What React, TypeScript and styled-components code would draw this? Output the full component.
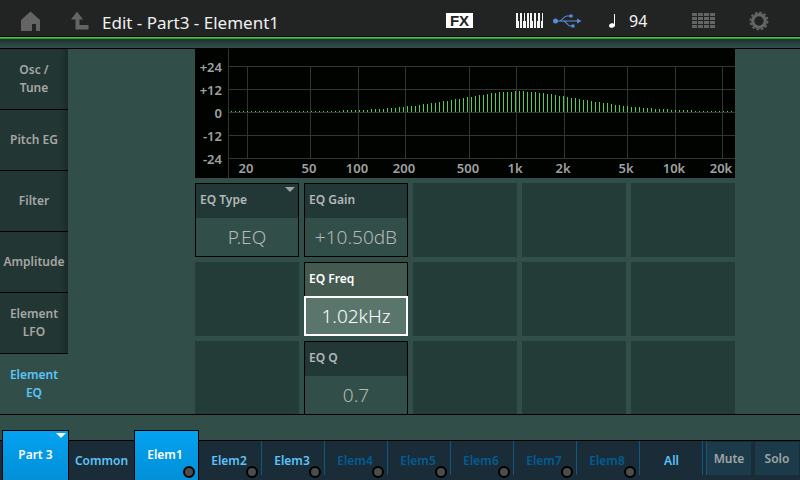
import React, { useState } from "react";
import styled, { createGlobalStyle, css } from "styled-components";

const GlobalStyle = createGlobalStyle`
  * { box-sizing: border-box; }
  body { margin: 0; background: #324e49; }
  button { font: inherit; color: inherit; border: 0; padding: 0; margin: 0; background: none; cursor: pointer; }
  svg { display: block; }
`;

const Screen = styled.div`
  display: flex;
  flex-direction: column;
  height: 100vh;
  overflow: hidden;
  background: #324e49;
  color: #a6a6a6;
  font-family: "Noto Sans", "Open Sans", sans-serif;
  font-size: 12px;
  font-weight: 600;
  line-height: 18px;
`;

const TopBar = styled.header`
  display: flex;
  align-items: center;
  height: 40px;
  flex: none;
  padding: 1px 31px 0 20px;
  background: linear-gradient(#222423 36px, #000 36px 37px, #4fc143 37px 38px, #2f9a2b 38px 39px, #1c3a30 39px);
`;

const IconButton = styled.button<{ $gap: number }>`
  display: flex;
  margin-right: ${(p) => p.$gap}px;
`;

const Title = styled.h1`
  flex: 1;
  margin: 0;
  padding-top: 4px;
  color: #f0f0f0;
  font-size: 17px;
  font-weight: 400;
  line-height: 22px;
  white-space: nowrap;
`;

const Tempo = styled.span`
  width: 63px;
  color: #f4f4f4;
  font-size: 16px;
  font-weight: 400;
`;

const Shade = styled.div`
  height: 8px;
  flex: none;
  background: linear-gradient(#1f3535, #26413f 40%, #324e49);
`;

const Body = styled.div`
  display: flex;
  flex: 1;
  min-height: 0;
  border: solid #000;
  border-width: 1px 0;
`;

const SideNav = styled.nav`
  display: flex;
  flex-direction: column;
  width: 68px;
  flex: none;
`;

const SideTab = styled.button<{ $active?: boolean }>`
  flex: 1;
  color: ${(p) => (p.$active ? "#5bc4fb" : "#a6a6a6")};
  white-space: pre-line;
  border-bottom: ${(p) => (p.$active ? "0" : "1px solid #000")};
  background: ${(p) => (p.$active ? "none" : "linear-gradient(90deg, #223633 60px, #1a2a29)")};
`;

const Content = styled.main`
  flex: 1;
  min-width: 0;
  overflow: hidden;
  padding: 0 65px 0 127px;
`;

const Graph = styled.svg`
  width: 100%;
  background: #000300;
  text {
    font-size: 13px;
    font-weight: 600;
    fill: #a0a0a0;
  }
`;

const ParamGrid = styled.div`
  display: grid;
  grid-template-columns: repeat(5, 1fr);
  grid-auto-rows: 74px;
  gap: 5px;
  padding-top: 5px;
`;

const EmptyCell = styled.div`
  background: #233c38;
`;

const ParamCard = styled.button<{ $selected: boolean }>`
  display: flex;
  flex-direction: column;
  position: relative;
  min-width: 0;
  border: 1px solid #000;
  text-align: left;
  color: #b4b8b6;
  background: #324e49;
  ${(p) =>
    p.$selected &&
    css`
      border-width: 1px 0 0;
      color: #fff;
    `}
`;

const ParamName = styled.span<{ $selected: boolean }>`
  width: 100%;
  height: ${(p) => (p.$selected ? 33 : 34)}px;
  padding: 7px 4px;
  background: ${(p) => (p.$selected ? "#445a50" : "#213837")};
  ${(p) =>
    p.$selected &&
    css`
      border: solid #000;
      border-width: 0 1px;
    `}
`;

const ParamValue = styled.span<{ $selected: boolean }>`
  display: flex;
  align-items: center;
  justify-content: center;
  flex: 1;
  width: 100%;
  font-size: 19px;
  font-weight: 300;
  ${(p) =>
    p.$selected &&
    css`
      border: 2px solid #fff;
      background: #5a766c;
    `}
`;

const MenuMark = styled.svg`
  position: absolute;
  top: 3px;
  right: 3px;
`;

const BottomBar = styled.nav`
  display: flex;
  align-items: flex-end;
  flex: none;
  height: 50px;
  margin-top: 15px;
  padding: 0 1px 0 2px;
  background: linear-gradient(transparent 10px, #000 10px 11px, #1b2c39 11px);
`;

const BottomTab = styled.button<{ $tone: "on" | "raised" | "dim"; $grow: number; $line?: boolean }>`
  display: flex;
  align-items: center;
  justify-content: center;
  position: relative;
  flex: ${(p) => p.$grow} 1 0;
  height: 39px;
  color: ${(p) => (p.$tone === "dim" ? "#025c92" : "#5bc4fb")};
  background: ${(p) => (p.$line ? "linear-gradient(#0f5880, #0f5880) right top / 1px 34px no-repeat" : "none")};
  ${(p) =>
    p.$tone === "raised" &&
    css`
      height: 50px;
      color: #fff;
      background: linear-gradient(#04a2f2, #0290d8);
      box-shadow: inset 1px 1px #000, inset -1px 0 #000;
    `}
`;

const TabLabel = styled.span`
  margin-right: 3px;
`;

const Lamp = styled.svg`
  position: absolute;
  right: 4px;
  bottom: 2px;
`;

const Divider = styled.span`
  width: 4px;
  height: 34px;
  align-self: flex-start;
  margin-top: 11px;
  border-right: 1px solid #0f5880;
`;

const SmallButton = styled.button`
  flex: 44 1 0;
  height: 33px;
  margin-bottom: 5px;
  color: #a0a4a6;
  background: #1b3b4a;
  & + & { margin-left: 4px; }
`;

const sideTabs = ["Osc /\nTune", "Pitch EG", "Filter", "Amplitude", "Element\nLFO", "Element\nEQ"];

// [bar height, number of neighbouring bars with it]
const barRuns: [number, number][] = [
  [1, 28], [2, 7], [3, 4], [4, 3], [5, 2], [6, 3], [7, 1], [8, 2], [9, 2], [10, 1], [11, 2], [12, 1], [13, 2],
  [14, 1], [15, 2], [16, 1], [17, 2], [18, 1], [19, 2], [20, 4], [21, 3], [20, 3], [19, 2], [18, 2], [17, 1],
  [16, 2], [15, 1], [14, 2], [13, 1], [12, 2], [11, 1], [10, 2], [9, 2], [8, 1], [7, 2], [6, 2], [5, 3], [4, 3],
  [3, 4], [2, 6], [1, 10],
];
const bars = barRuns.flatMap(([height, count]) => Array<number>(count).fill(height));

const gainLines: [string, number][] = [["+24", 18], ["+12", 41], ["0", 64], ["-12", 87], ["-24", 110]];
const freqLines: [string, number][] = [
  ["20", 52], ["50", 115], ["100", 163], ["200", 210], ["500", 274],
  ["1k", 321], ["2k", 369], ["5k", 432], ["10k", 480], ["20k", 527],
];

type Param = { name: string; value: string; menu?: boolean };
const cells: (Param | null)[] = [
  { name: "EQ Type", value: "P.EQ", menu: true }, { name: "EQ Gain", value: "+10.50dB" }, null, null, null,
  null, { name: "EQ Freq", value: "1.02kHz" }, null, null, null,
  null, { name: "EQ Q", value: "0.7" }, null, null, null,
];

function ResponseGraph() {
  return (
    <Graph viewBox="0 0 540 129" role="img" aria-label="EQ response">
      <g fill="#333533" shapeRendering="crispEdges">
        <rect x="33" y="0" width="1" height="129" />
        {gainLines.map(([label, y]) => <rect key={label} x="33" y={y - 1} width="507" height="1" />)}
        {freqLines.map(([label, x]) => <rect key={label} x={x} y="17" width="1" height="93" />)}
      </g>
      <g fill="#50d050" shapeRendering="crispEdges">
        {bars.map((h, i) => <rect key={i} x={36 + i * 4} y={63 - h} width="1" height={h} />)}
      </g>
      {gainLines.map(([label, y]) => (
        <text key={label} x={27} y={y + 5} textAnchor="end">{label}</text>
      ))}
      {freqLines.map(([label, x]) => (
        <text key={label} x={x - 1} y={124} textAnchor="middle">{label}</text>
      ))}
    </Graph>
  );
}

function Triangle({ color }: { color: string }) {
  return (
    <MenuMark width="10" height="6" viewBox="0 0 10 6" aria-hidden="true">
      <path d="M0 0H10L5 5Z" fill={color} />
    </MenuMark>
  );
}

const HomeIcon = () => (
  <svg width="22" height="20" viewBox="0 0 22 20" fill="#636463" aria-hidden="true">
    <path d="M10.5 0.5L20 9V20H16V13H12V20H1V9Z" />
  </svg>
);

const UpIcon = () => (
  <svg width="18" height="19" viewBox="0 0 18 19" fill="#636463" aria-hidden="true">
    <path d="M6 0.5L12 8.5H8.5V14H17.5V18.5H4.5V8.5H0Z" />
  </svg>
);

const FxIcon = () => (
  <svg width="27" height="15" viewBox="0 0 27 15" role="img" aria-label="FX">
    <rect width="27" height="15" fill="#fff" />
    <text x="13.5" y="13" textAnchor="middle" fontFamily="Liberation Sans" fontWeight="700" fontSize="15" fill="#222423">FX</text>
  </svg>
);

const KeysIcon = () => (
  <svg width="27" height="15" viewBox="0 0 27 15" shapeRendering="crispEdges" role="img" aria-label="Keyboard">
    <rect width="27" height="15" fill="#f4f4f4" />
    <g fill="#222423">
      {[3, 6, 10, 13, 17, 20, 24].map((x) => <rect key={x} x={x} y="8" width="1" height="7" />)}
      {[2, 6, 9, 13, 16, 20, 24].map((x) => <rect key={x} x={x} width={x === 13 ? 1 : 2} height="8" />)}
    </g>
  </svg>
);

const UsbIcon = () => (
  <svg width="29" height="14" viewBox="0 0 29 14" fill="none" stroke="#5b8be0" strokeWidth="1.2" role="img" aria-label="USB">
    <circle cx="2.5" cy="7" r="2.5" fill="#5b8be0" stroke="none" />
    <path d="M3 7H25M6 7C10 7 10 2 14 2H18M10 7C14 7 14 12 17 12H20" />
    <path d="M24 4.5L28.5 7L24 9.5Z" fill="#5b8be0" stroke="none" />
    <circle cx="18" cy="2" r="1.8" fill="#5b8be0" stroke="none" />
    <rect x="18.5" y="10.5" width="3" height="3" fill="#5b8be0" stroke="none" />
  </svg>
);

const NoteIcon = () => (
  <svg width="8" height="14" viewBox="0 0 8 14" fill="#fff" aria-hidden="true">
    <ellipse cx="3" cy="11.5" rx="3" ry="2.2" transform="rotate(-15 3 11.5)" />
    <rect x="5" y="0" width="1" height="12" />
  </svg>
);

const PadsIcon = () => (
  <svg width="24" height="15" viewBox="0 0 24 15" fill="#636463" shapeRendering="crispEdges" aria-hidden="true">
    {[0, 4, 8, 12].flatMap((y) =>
      [0, 6, 12, 18].map((x) => <rect key={`${x}-${y}`} x={x} y={y} width="5" height="3" />)
    )}
  </svg>
);

const GearIcon = () => (
  <svg width="20" height="20" viewBox="0 0 20 20" fill="none" stroke="#636463" aria-hidden="true">
    <circle cx="10" cy="10" r="6.3" strokeWidth="3.2" />
    <circle cx="10" cy="10" r="8.6" strokeWidth="1.8" strokeDasharray="2.5 2.003" />
  </svg>
);

export default function App() {
  const [section, setSection] = useState(5);
  const [selected, setSelected] = useState("EQ Freq");
  const [element, setElement] = useState(1);

  return (
    <Screen>
      <GlobalStyle />
      <TopBar>
        <IconButton $gap={29} aria-label="Home"><HomeIcon /></IconButton>
        <IconButton $gap={13} aria-label="Up"><UpIcon /></IconButton>
        <Title>Edit - Part3 - Element1</Title>
        <IconButton $gap={43} aria-label="Effects"><FxIcon /></IconButton>
        <IconButton $gap={10} aria-label="Keyboard"><KeysIcon /></IconButton>
        <IconButton $gap={27} aria-label="USB"><UsbIcon /></IconButton>
        <IconButton $gap={12} aria-label="Tempo"><NoteIcon /></IconButton>
        <Tempo>94</Tempo>
        <IconButton $gap={33} aria-label="Pads"><PadsIcon /></IconButton>
        <IconButton $gap={0} aria-label="Settings"><GearIcon /></IconButton>
      </TopBar>
      <Shade />
      <Body>
        <SideNav aria-label="Sections">
          {sideTabs.map((label, i) => (
            <SideTab key={label} $active={i === section} onClick={() => setSection(i)}>{label}</SideTab>
          ))}
        </SideNav>
        <Content>
          <ResponseGraph />
          <ParamGrid>
            {cells.map((cell, i) => {
              if (!cell) return <EmptyCell key={i} />;
              const on = cell.name === selected;
              return (
                <ParamCard key={i} $selected={on} onClick={() => setSelected(cell.name)}>
                  <ParamName $selected={on}>{cell.name}</ParamName>
                  <ParamValue $selected={on}>{cell.value}</ParamValue>
                  {cell.menu && <Triangle color="#a0a0a0" />}
                </ParamCard>
              );
            })}
          </ParamGrid>
        </Content>
      </Body>
      <BottomBar aria-label="Elements">
        <BottomTab $tone="raised" $grow={67}>
          Part 3
          <Triangle color="#fff" />
        </BottomTab>
        <BottomTab $tone={element === 0 ? "raised" : "on"} $grow={65} onClick={() => setElement(0)}>Common</BottomTab>
        {[1, 2, 3, 4, 5, 6, 7, 8].map((n) => (
          <BottomTab
            key={n}
            $tone={n === element ? "raised" : n < 4 ? "on" : "dim"}
            $grow={n === 1 ? 65 : 63}
            $line={n !== element}
            onClick={() => setElement(n)}
          >
            <TabLabel>Elem{n}</TabLabel>
            <Lamp width="12" height="12" viewBox="0 0 12 12" aria-hidden="true">
              <circle cx="6" cy="6" r="5" fill="#4c4c4a" stroke="#000" strokeWidth="2" />
            </Lamp>
          </BottomTab>
        ))}
        <BottomTab $tone={element === 9 ? "raised" : "on"} $grow={63} $line onClick={() => setElement(9)}>All</BottomTab>
        <Divider />
        <SmallButton>Mute</SmallButton>
        <SmallButton>Solo</SmallButton>
      </BottomBar>
    </Screen>
  );
}
